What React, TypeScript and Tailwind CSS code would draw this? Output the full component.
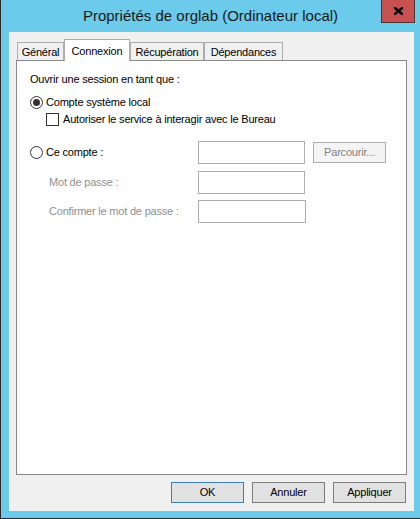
import React from "react";

const tabs = [
  { label: "Général", w: "w-[47px]" },
  { label: "Connexion", w: "w-[66px]", active: true },
  { label: "Récupération", w: "w-[74px]" },
  { label: "Dépendances", w: "w-[79px]" },
];

const Radio: React.FC<{ checked?: boolean }> = ({ checked }) => (
  <span className="flex h-[13px] w-[13px] shrink-0 items-center justify-center rounded-full border border-[#333333] bg-white">
    {checked && <span className="h-[7px] w-[7px] rounded-full bg-[#333333]" />}
  </span>
);

const Field: React.FC<{ wide?: boolean }> = ({ wide }) => (
  <div className={`h-[23px] ${wide ? "w-[108px]" : "w-[107px]"} border border-[#adadad] bg-white`} />
);

const DialogButton: React.FC<{ label: string; primary?: boolean }> = ({ label, primary }) => (
  <button
    className={`flex h-[21px] w-[73px] items-center justify-center border bg-[#e1e1e1] text-black ${
      primary ? "border-[#3c7fb1]" : "border-[#7c7c7c]"
    }`}
  >
    {label}
  </button>
);

export default function App() {
  return (
    <div className="h-[519px] w-[420px] overflow-hidden border-b border-l border-[#2b2b2b] bg-[#6ccaeb] font-['Liberation_Sans',sans-serif] text-[11px] tracking-[-0.2px] text-black">
      {/* title bar */}
      <div className="grid h-[32px] grid-cols-[1fr_auto_1fr]">
        <div />
        <div className="flex items-center text-[15px] tracking-normal text-[#1a1a1a]">
          Propriétés de orglab (Ordinateur local)
        </div>
        <div className="flex items-start justify-end pr-[5px]">
          <div className="flex h-[23px] w-[34px] items-center justify-center border border-t-0 border-[#4e3535] bg-[#c75050]">
            <svg width="9" height="8" viewBox="0 0 9 8">
              <path d="M1 1 L8 7 M8 1 L1 7" stroke="#000" strokeWidth="2.4" strokeLinecap="square" />
            </svg>
          </div>
        </div>
      </div>

      {/* window body */}
      <div className="ml-[8px] flex h-[479px] w-[405px] flex-col bg-[#f0f0f0] px-[7px] pt-[7px]">
        {/* tabs */}
        <div className="flex h-[21px] items-end pl-[1px]">
          {tabs.map((t) =>
            t.active ? (
              <div
                key={t.label}
                className={`relative z-10 -mb-px flex h-[22px] ${t.w} items-start justify-center border border-b-0 border-[#adadad] bg-white pt-[3px]`}
              >
                {t.label}
              </div>
            ) : (
              <div
                key={t.label}
                className={`flex h-[18px] ${t.w} items-center justify-center border border-b-0 border-[#adadad] bg-[#f0f0f0] pt-[1px]`}
              >
                {t.label}
              </div>
            )
          )}
        </div>

        {/* tab panel */}
        <div className="h-[415px] w-[391px] border border-[#898989] bg-white pl-[13px]">
          <div className="mt-[12px] h-[13px] leading-[13px]">Ouvrir une session en tant que :</div>

          <div className="mt-[10px] flex h-[13px] items-center gap-[3px]">
            <Radio checked />
            <span>Compte système local</span>
          </div>

          <div className="mt-[4px] flex h-[13px] items-center gap-[4px] pl-[16px]">
            <span className="h-[13px] w-[13px] border border-[#333333] bg-white" />
            <span>Autoriser le service à interagir avec le Bureau</span>
          </div>

          <div className="mt-[15px] flex h-[23px] items-center">
            <div className="flex w-[168px] items-center gap-[3px]">
              <Radio />
              <span>Ce compte :</span>
            </div>
            <Field />
            <button className="ml-[8px] flex h-[21px] w-[73px] items-center justify-center border border-[#adadad] bg-[#f4f4f4] text-[#838383]">
              Parcourir...
            </button>
          </div>

          <div className="mt-[7px] flex h-[23px] items-center">
            <div className="w-[168px] pl-[19px] text-[#8f8f8f]">Mot de passe :</div>
            <Field />
          </div>

          <div className="mt-[6px] flex h-[23px] items-center">
            <div className="w-[168px] pl-[19px] text-[#8f8f8f]">Confirmer le mot de passe :</div>
            <Field wide />
          </div>
        </div>

        {/* buttons */}
        <div className="mt-[7px] flex justify-end gap-[8px] pr-[1px]">
          <DialogButton label="OK" primary />
          <DialogButton label="Annuler" />
          <DialogButton label="Appliquer" />
        </div>
      </div>
    </div>
  );
}
